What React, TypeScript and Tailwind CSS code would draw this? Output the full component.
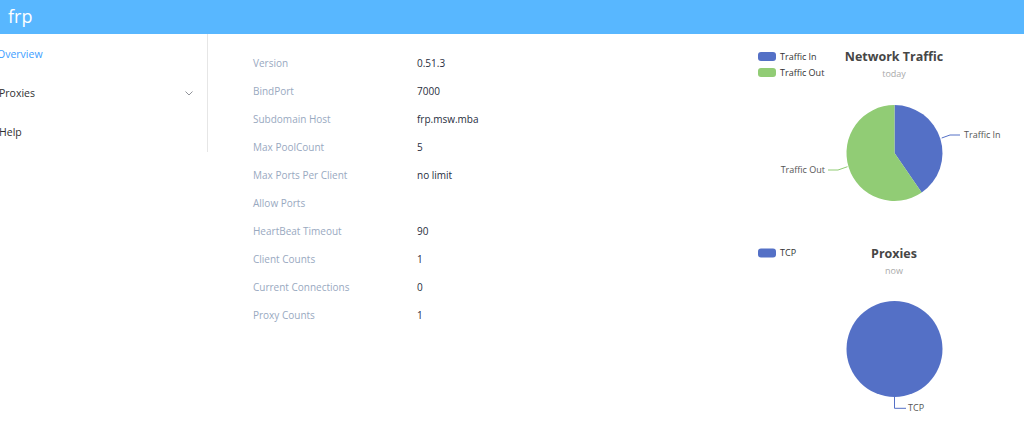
import React from "react";

const font = { fontFamily: '"Open Sans", "Liberation Sans", sans-serif' };

const rows: [string, string][] = [
  ["Version", "0.51.3"],
  ["BindPort", "7000"],
  ["Subdomain Host", "frp.msw.mba"],
  ["Max PoolCount", "5"],
  ["Max Ports Per Client", "no limit"],
  ["Allow Ports", ""],
  ["HeartBeat Timeout", "90"],
  ["Client Counts", "1"],
  ["Current Connections", "0"],
  ["Proxy Counts", "1"],
];

function piePath(cx: number, cy: number, r: number, a0: number, a1: number) {
  const p = (a: number) => [cx + r * Math.sin(a), cy - r * Math.cos(a)];
  const [x0, y0] = p(a0);
  const [x1, y1] = p(a1);
  const large = a1 - a0 > Math.PI ? 1 : 0;
  return `M${cx},${cy} L${x0},${y0} A${r},${r} 0 ${large} 1 ${x1},${y1} Z`;
}

function TrafficChart() {
  const cx = 144.5;
  const cy = 111;
  const r = 48;
  const split = (145.5 / 180) * Math.PI;
  return (
    <svg width="274" height="197" className="block" style={font}>
      <rect x="8" y="10" width="18" height="9" rx="3" fill="#5470c6" />
      <text x="30" y="17.5" fontSize="9" fill="#333">Traffic In</text>
      <rect x="8" y="26" width="18" height="9" rx="3" fill="#91cc75" />
      <text x="30" y="33.5" fontSize="9" fill="#333">Traffic Out</text>
      <text x="144" y="19" fontSize="12.5" fontWeight="700" fill="#464646" textAnchor="middle">Network Traffic</text>
      <text x="144" y="35" fontSize="9" fill="#aaa" textAnchor="middle">today</text>
      <path d={piePath(cx, cy, r, 0, split)} fill="#5470c6" />
      <path d={piePath(cx, cy, r, split, Math.PI * 2 - 0.0001)} fill="#91cc75" />
      <polyline points="191.7,96 200,93 210,93" fill="none" stroke="#5470c6" strokeWidth="1" />
      <text x="214" y="96" fontSize="9" fill="#555">Traffic In</text>
      <polyline points="97.5,124.7 88,128 78,128" fill="none" stroke="#91cc75" strokeWidth="1" />
      <text x="75" y="131" fontSize="9" fill="#555" textAnchor="end">Traffic Out</text>
    </svg>
  );
}

function ProxiesChart() {
  return (
    <svg width="274" height="197" className="block" style={font}>
      <rect x="8" y="9.5" width="18" height="9" rx="3" fill="#5470c6" />
      <text x="30" y="17" fontSize="9" fill="#333">TCP</text>
      <text x="144" y="19" fontSize="12.5" fontWeight="700" fill="#464646" textAnchor="middle">Proxies</text>
      <text x="144" y="35" fontSize="9" fill="#aaa" textAnchor="middle">now</text>
      <circle cx="144.5" cy="110" r="48" fill="#5470c6" />
      <polyline points="144.5,158 144.5,169.3 156,169.3" fill="none" stroke="#5470c6" strokeWidth="1" />
      <text x="158" y="172.3" fontSize="9" fill="#555">TCP</text>
    </svg>
  );
}

export default function App() {
  return (
    <div className="w-[1024px] h-[422px] bg-white overflow-hidden" style={font}>
      <header className="h-[34px] bg-[#58b7ff] flex items-center pl-[8px]">
        <span className="text-white text-[18px] leading-none -mt-[3px]">frp</span>
      </header>
      <div className="flex">
        <nav className="w-[208px] shrink-0 self-start border-r border-[#e6e6e6] pt-[1px]">
          <div className="h-[39px] flex items-center -ml-[3px] text-[10.5px] text-[#409eff]">Overview</div>
          <div className="h-[39px] flex items-center justify-between -ml-[1px] pr-[14px] text-[10.5px] text-[#303133]">
            <span>Proxies</span>
            <svg width="8" height="5" viewBox="0 0 8 5">
              <polyline points="0.5,0.5 4,4 7.5,0.5" fill="none" stroke="#909399" strokeWidth="1" />
            </svg>
          </div>
          <div className="h-[39px] flex items-center -ml-[1px] text-[10.5px] text-[#303133]">Help</div>
        </nav>
        <main className="pl-[45px] pt-[15px] w-[542px] shrink-0">
          {rows.map(([k, v]) => (
            <div key={k} className="h-[28px] flex items-center text-[10px]">
              <span className="w-[164px] text-[#99a9bf]">{k}</span>
              <span className="text-[#1f2d3d]">{v}</span>
            </div>
          ))}
        </main>
        <aside className="pt-[8px] flex flex-col">
          <TrafficChart />
          <ProxiesChart />
        </aside>
      </div>
    </div>
  );
}
